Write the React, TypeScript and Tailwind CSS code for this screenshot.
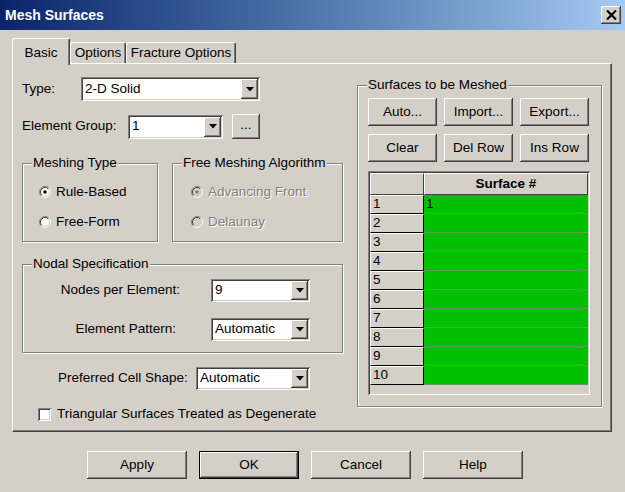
import React from 'react';

const raised =
  'bg-[#d4d0c8] shadow-[inset_-1px_-1px_0_#404040,inset_1px_1px_0_#ffffff,inset_-2px_-2px_0_#808080,inset_2px_2px_0_#d4d0c8]';
const sunken =
  'shadow-[inset_1px_1px_0_#808080,inset_-1px_-1px_0_#ffffff,inset_2px_2px_0_#404040,inset_-2px_-2px_0_#d4d0c8]';
const etched =
  'border border-[#808080] shadow-[inset_1px_1px_0_#ffffff,1px_1px_0_#ffffff]';

function DropArrow() {
  return (
    <div className={`${raised} w-[17px] flex items-center justify-center`}>
      <svg width="8" height="5" viewBox="0 0 8 5">
        <path d="M0 0h8L4 4.5z" fill="#000" />
      </svg>
    </div>
  );
}

function Combo({ value, className }: { value: string; className: string }) {
  return (
    <div className={`${sunken} ${className} bg-white flex p-[2px]`}>
      <div className="flex-1 flex items-center pl-[2px]">{value}</div>
      <DropArrow />
    </div>
  );
}

function Button({ label, className }: { label: string; className: string }) {
  return (
    <div className={`${raised} ${className} flex items-center justify-center`}>
      {label}
    </div>
  );
}

function Radio({ checked, disabled }: { checked?: boolean; disabled?: boolean }) {
  return (
    <svg width="12" height="12" viewBox="0 0 12 12">
      <circle cx="6" cy="6" r="4.5" fill={disabled ? '#d4d0c8' : '#ffffff'} />
      <path d="M2.11 9.89A5.5 5.5 0 0 1 9.89 2.11" stroke="#808080" fill="none" />
      <path d="M9.89 2.11A5.5 5.5 0 0 1 2.11 9.89" stroke="#ffffff" fill="none" />
      <path d="M2.82 9.18A4.5 4.5 0 0 1 9.18 2.82" stroke="#404040" fill="none" />
      <path d="M9.18 2.82A4.5 4.5 0 0 1 2.82 9.18" stroke="#d4d0c8" fill="none" />
      {checked && <circle cx="6" cy="6" r="1.7" fill={disabled ? '#808080' : '#000'} />}
    </svg>
  );
}

function RadioRow({
  label,
  checked,
  disabled,
}: {
  label: string;
  checked?: boolean;
  disabled?: boolean;
}) {
  return (
    <div className="h-[16px] flex items-center gap-[5px]">
      <Radio checked={checked} disabled={disabled} />
      <span
        className={
          disabled ? 'text-[#808080] [text-shadow:1px_1px_0_#ffffff]' : 'text-black'
        }
      >
        {label}
      </span>
    </div>
  );
}

function GroupBox({
  title,
  className,
  children,
}: {
  title: string;
  className: string;
  children?: React.ReactNode;
}) {
  return (
    <div className={`${etched} ${className} relative`}>
      <span className="absolute -top-[9px] left-[9px] bg-[#d4d0c8] px-[1px] leading-[16px]">
        {title}
      </span>
      {children}
    </div>
  );
}

function SurfaceGrid() {
  const rows = [1, 2, 3, 4, 5, 6, 7, 8, 9, 10];
  return (
    <div className={`${sunken} w-[222px] h-[224px] p-[2px] bg-[#d4d0c8]`}>
      <div className="flex h-[22px]">
        <div className="w-[54px] border-t border-l border-white border-r border-b border-r-[#404040] border-b-[#404040]" />
        <div className="flex-1 flex items-center justify-center font-bold border-t border-l border-white border-r border-b border-r-[#404040] border-b-[#404040]">
          Surface #
        </div>
      </div>
      {rows.map((n) => (
        <div key={n} className="flex h-[19px]">
          <div className="w-[54px] flex items-center pl-[2px] border-t border-l border-white border-r border-b border-r-black border-b-black">
            {n}
          </div>
          <div className="flex-1 bg-[#00c000] border-b border-[#5e9a5e] flex items-center pl-[2px]">
            {n === 1 ? '1' : ''}
          </div>
        </div>
      ))}
    </div>
  );
}

export default function App() {
  return (
    <div className="w-[625px] h-[492px] bg-[#d4d0c8] overflow-hidden text-[13.5px] text-black font-['Liberation_Sans',Arial,sans-serif] select-none">
      {/* title bar */}
      <div className="h-[30px] flex items-center justify-between pl-[5px] pr-[4px] bg-linear-to-r from-[#0a246a] to-[#a6caf0]">
        <span className="text-white font-bold text-[14px]">Mesh Surfaces</span>
        <div className={`${raised} w-[20px] h-[18px] flex items-center justify-center`}>
          <svg width="11" height="10" viewBox="0 0 11 10">
            <path d="M1 0.5L10 9.5M10 0.5L1 9.5" stroke="#000" strokeWidth="2.2" />
          </svg>
        </div>
      </div>

      {/* tabs */}
      <div className="pt-[8px] pl-[12px] h-[33px] flex items-end">
        <div className="relative z-10 -mb-[2px] h-[27px] w-[58px] bg-[#d4d0c8] flex items-start justify-center pt-[4px] border-t border-l border-white border-r border-r-[#404040] rounded-tl-[3px] rounded-tr-[2px] shadow-[inset_-1px_0_0_#808080]">
          Basic
        </div>
        <div className="h-[21px] w-[56px] flex items-center justify-center border-t border-l border-white border-r border-r-[#404040] rounded-tl-[3px] rounded-tr-[2px] shadow-[inset_-1px_0_0_#808080]">
          Options
        </div>
        <div className="h-[21px] w-[110px] flex items-center justify-center border-t border-l border-white border-r border-r-[#404040] rounded-tl-[3px] rounded-tr-[2px] shadow-[inset_-1px_0_0_#808080]">
          Fracture Options
        </div>
      </div>

      {/* tab panel */}
      <div className="ml-[12px] w-[600px] h-[369px] flex items-start pl-[9px] border-t border-l border-white border-r border-b border-r-[#404040] border-b-[#404040] shadow-[inset_-1px_-1px_0_#808080]">
        {/* left column */}
        <div className="w-[321px] pt-[13px] flex flex-col">
          <div className="flex items-center h-[24px]">
            <span className="w-[59px]">Type:</span>
            <Combo value="2-D Solid" className="w-[179px] h-[24px]" />
          </div>

          <div className="flex items-center h-[25px] mt-[13px]">
            <span className="w-[106px]">Element Group:</span>
            <Combo value="1" className="w-[95px] h-[24px]" />
            <Button label="..." className="ml-[9px] w-[28px] h-[25px] pb-[2px]" />
          </div>

          <div className="flex mt-[24px]">
            <GroupBox title="Meshing Type" className="w-[136px] h-[79px] pt-[20px] pl-[16px] flex flex-col gap-[14px]">
              <RadioRow label="Rule-Based" checked />
              <RadioRow label="Free-Form" />
            </GroupBox>
            <GroupBox title="Free Meshing Algorithm" className="ml-[14px] w-[171px] h-[79px] pt-[20px] pl-[18px] flex flex-col gap-[14px]">
              <RadioRow label="Advancing Front" checked disabled />
              <RadioRow label="Delaunay" disabled />
            </GroupBox>
          </div>

          <GroupBox title="Nodal Specification" className="mt-[22px] w-[321px] h-[89px] pt-[14px] flex flex-col gap-[16px]">
            <div className="flex items-center h-[23px]">
              <span className="w-[157px] text-right">Nodes per Element:</span>
              <Combo value="9" className="ml-[31px] w-[99px] h-[23px]" />
            </div>
            <div className="flex items-center h-[23px]">
              <span className="w-[153px] text-right">Element Pattern:</span>
              <Combo value="Automatic" className="ml-[35px] w-[99px] h-[23px]" />
            </div>
          </GroupBox>

          <div className="flex items-center h-[23px] mt-[14px] pl-[36px]">
            <span className="w-[138px]">Preferred Cell Shape:</span>
            <Combo value="Automatic" className="w-[114px] h-[23px]" />
          </div>

          <div className="flex items-center h-[14px] mt-[17px] pl-[16px] gap-[6px]">
            <div className={`${sunken} w-[13px] h-[13px] bg-white`} />
            <span>Triangular Surfaces Treated as Degenerate</span>
          </div>
        </div>

        {/* right group */}
        <GroupBox title="Surfaces to be Meshed" className="ml-[14px] mt-[21px] w-[245px] h-[322px] pt-[12px] pl-[10px]">
          <div className="grid grid-cols-3 gap-x-[7px] gap-y-[8px] w-[221px]">
            <Button label="Auto..." className="h-[28px]" />
            <Button label="Import..." className="h-[28px]" />
            <Button label="Export..." className="h-[28px]" />
            <Button label="Clear" className="h-[28px]" />
            <Button label="Del Row" className="h-[28px]" />
            <Button label="Ins Row" className="h-[28px]" />
          </div>
          <div className="mt-[9px]">
            <SurfaceGrid />
          </div>
        </GroupBox>
      </div>

      {/* dialog buttons */}
      <div className="mt-[19px] pl-[87px] flex gap-[12px]">
        <Button label="Apply" className="w-[100px] h-[28px]" />
        <div className="w-[100px] h-[28px] border border-black flex">
          <Button label="OK" className="flex-1" />
        </div>
        <Button label="Cancel" className="w-[100px] h-[28px]" />
        <Button label="Help" className="w-[100px] h-[28px]" />
      </div>
    </div>
  );
}
